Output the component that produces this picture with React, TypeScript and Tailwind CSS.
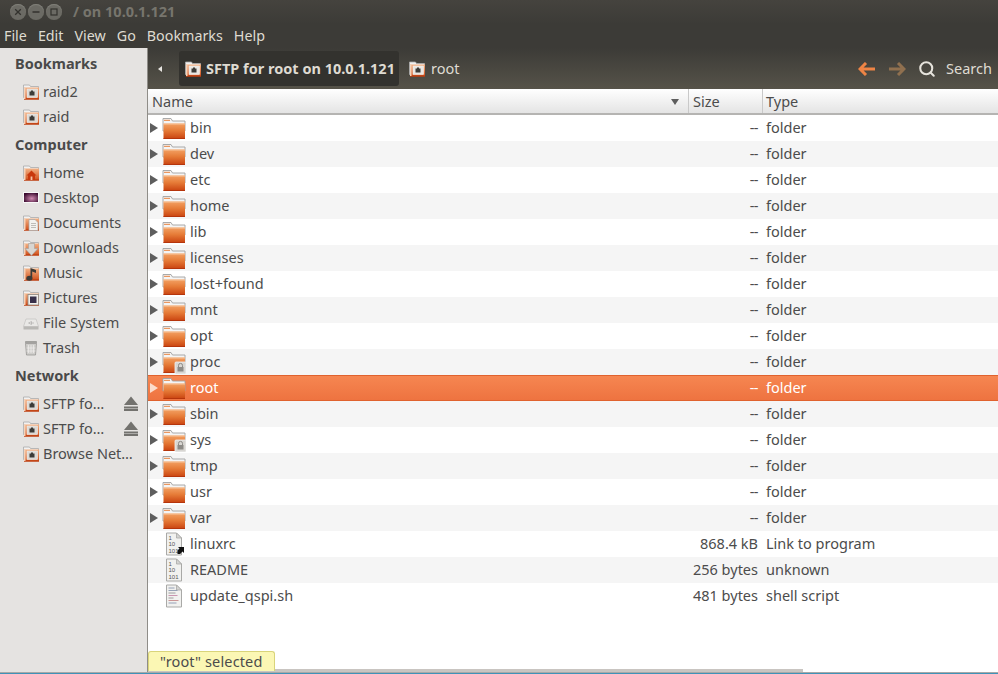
import { Search } from "lucide-react";

const font = "font-['Noto_Sans',sans-serif]";

const bookmarks = ["raid2", "raid"];
const computer = [
  { name: "Home", kind: "home" },
  { name: "Desktop", kind: "desktop" },
  { name: "Documents", kind: "documents" },
  { name: "Downloads", kind: "downloads" },
  { name: "Music", kind: "music" },
  { name: "Pictures", kind: "pictures" },
  { name: "File System", kind: "drive" },
  { name: "Trash", kind: "trash" },
];

const folders = ["bin", "dev", "etc", "home", "lib", "licenses", "lost+found", "mnt", "opt", "proc", "root", "sbin", "sys", "tmp", "usr", "var"];
const locked = ["proc", "sys"];

function FolderIcon({ lock }: { lock?: boolean }) {
  return (
    <svg width="24" height="24" viewBox="0 0 24 24" className="shrink-0">
      <defs>
        <linearGradient id="fold" x1="0" y1="0" x2="0" y2="1">
          <stop offset="0" stopColor="#f3a164" />
          <stop offset="0.45" stopColor="#e67c38" />
          <stop offset="1" stopColor="#c9420f" />
        </linearGradient>
      </defs>
      <path d="M1 2.500h8l1.500 2.500H23v10H1z" fill="#f4f4f4" stroke="#a0a0a0" strokeWidth="0.9" />
      <rect x="2" y="3.800" width="6" height="1" fill="#e8803c" />
      <path d="M1.500 7.500h21.500v15a.5.5 0 0 1-.5.5H2a.5.5 0 0 1-.5-.5z" fill="url(#fold)" />
      <rect x="1.500" y="7.500" width="21.500" height="1" fill="#f8c39a" />
      <rect x="1.500" y="22" width="21.500" height="1" fill="#b5350c" />
      {lock && (
        <g>
          <rect x="13" y="12" width="11" height="12" rx="1" fill="#d8d6d2" stroke="#f2f2f2" strokeWidth="0.8" />
          <path d="M16.500 17v-1.600a2 2 0 0 1 4 0V17" fill="none" stroke="#8c8a86" strokeWidth="1" />
          <rect x="15.500" y="17" width="6" height="4.500" fill="#8c8a86" />
        </g>
      )}
    </svg>
  );
}

function SmallBase({ children }: { children?: React.ReactNode }) {
  return (
    <svg width="16" height="16" viewBox="0 0 16 16" className="shrink-0">
      <defs>
        <linearGradient id="smallfold" x1="0" y1="0" x2="0" y2="1">
          <stop offset="0" stopColor="#f2b184" />
          <stop offset="1" stopColor="#cf4d18" />
        </linearGradient>
      </defs>
      <path d="M.5 1h6l1 1.500h8v11H.5z" fill="#f1f1f1" stroke="#a9a9a9" strokeWidth="0.8" />
      <rect x="1" y="3.500" width="15" height="12" fill="url(#smallfold)" />
      <rect x="1" y="14.500" width="15" height="1" fill="#b5380f" />
      <rect x="1" y="4" width="1.500" height="11" fill="#f6d2b8" />
      {children}
    </svg>
  );
}

function RemoteIcon({ light }: { light?: boolean }) {
  return (
    <SmallBase>
      <rect x="4" y="5" width="10.500" height="8.500" fill={light ? "#e9e7e3" : "#dcdad6"} stroke="#f4f2ee" strokeWidth="0.6" />
      <rect x="6.500" y="7.500" width="5" height="4" fill="#3c3b37" />
      <rect x="8" y="6.500" width="2" height="1.500" fill="#3c3b37" />
    </SmallBase>
  );
}

function PlaceIcon({ kind }: { kind: string }) {
  if (kind === "home")
    return (
      <SmallBase>
        <path d="M3.500 10.500l5-5 5 5h-1.500v4.500H5v-4.500z" fill="#c9380c" />
        <rect x="7.600" y="11.500" width="1.800" height="3.500" fill="#f3c1a3" />
      </SmallBase>
    );
  if (kind === "desktop")
    return (
      <svg width="16" height="16" viewBox="0 0 16 16" className="shrink-0">
        <defs>
          <radialGradient id="desk" cx="0.55" cy="0.6" r="0.6">
            <stop offset="0" stopColor="#d28bb2" />
            <stop offset="1" stopColor="#3a0a2e" />
          </radialGradient>
        </defs>
        <rect x="0.500" y="2.500" width="15" height="10" fill="url(#desk)" stroke="#f7f7f7" strokeWidth="1" />
      </svg>
    );
  if (kind === "documents")
    return (
      <SmallBase>
        <path d="M6 4.500h6l3 3v8H6z" fill="#f3f2ef" stroke="#a7a5a2" strokeWidth="0.7" />
        <path d="M8 8.500h5M8 10.500h5M8 12.500h5" stroke="#b0aeaa" strokeWidth="0.8" />
      </SmallBase>
    );
  if (kind === "downloads")
    return (
      <SmallBase>
        <path d="M5.500 3.500h6v5h3.500l-6.500 7L2 8.500h3.500z" fill="#d8d6d2" stroke="#a2a09c" strokeWidth="0.6" />
      </SmallBase>
    );
  if (kind === "music")
    return (
      <SmallBase>
        <path d="M7.500 13V3l5.500 2v3L9.200 6.600V13z" fill="#3c3b37" />
        <ellipse cx="6.400" cy="13.200" rx="3" ry="2.500" fill="#3c3b37" />
      </SmallBase>
    );
  if (kind === "pictures")
    return (
      <SmallBase>
        <rect x="5" y="4.500" width="10.500" height="10.500" fill="#f2f0ec" stroke="#8b8985" strokeWidth="0.8" />
        <rect x="7" y="6.500" width="6.500" height="6.500" fill="#37304a" />
      </SmallBase>
    );
  if (kind === "drive")
    return (
      <svg width="16" height="16" viewBox="0 0 16 16" className="shrink-0">
        <path d="M3 4h10l2.500 7.500h-15z" fill="#e9e8e6" stroke="#c3c2c0" strokeWidth="0.7" />
        <rect x="0.500" y="11.500" width="15" height="3" rx="0.600" fill="#b9b8b5" />
        <path d="M5.500 8l3-1.500v3zM8 8h3" stroke="#b5b4b2" strokeWidth="0.8" fill="none" />
      </svg>
    );
  return (
    <svg width="16" height="16" viewBox="0 0 16 16" className="shrink-0">
      <path d="M2.500 3.500h11l-1 11.500h-9z" fill="#cfcecb" stroke="#8e8d8a" strokeWidth="0.7" />
      <rect x="2" y="1" width="12" height="2.500" rx="0.800" fill="#a3a29f" />
      <path d="M5.500 5v8M8 5v8M10.500 5v8M3.500 8h9M3.500 11h9" stroke="#efeeec" strokeWidth="0.7" />
    </svg>
  );
}

function EjectIcon() {
  return (
    <svg width="16" height="16" viewBox="0 0 16 16" className="shrink-0">
      <path d="M8 0.500l7 8.500H1z" fill="#73726e" />
      <rect x="1" y="10.500" width="14" height="2" fill="#73726e" />
      <rect x="1" y="13" width="14" height="2" fill="#73726e" />
    </svg>
  );
}

function FileIcon({ kind }: { kind: "binary" | "link" | "script" }) {
  return (
    <svg width="24" height="24" viewBox="0 0 24 24" className="shrink-0">
      <path d="M4.500 1h10l5 5v17h-15z" fill="#f1f1ef" stroke="#a9a9a7" strokeWidth="1" />
      <path d="M14.500 1v5h5z" fill="#d4d4d2" stroke="#a9a9a7" strokeWidth="0.8" />
      {kind !== "script" ? (
        <g fill="#555" fontFamily="Liberation Sans, sans-serif" fontSize="6">
          <text x="6.500" y="7.500">1</text>
          <text x="6.500" y="14">10</text>
          <text x="6.500" y="20.500">101</text>
        </g>
      ) : (
        <g strokeWidth="0.8">
          <path d="M6.500 4h6" stroke="#7f8ea8" />
          <path d="M6.500 6.500h9" stroke="#7f8ea8" />
          <path d="M6.500 9h7" stroke="#8a8a8a" />
          <path d="M6.500 11.500h9" stroke="#c07f9f" />
          <path d="M6.500 14h5" stroke="#8a8a8a" />
          <path d="M6.500 16.500h10" stroke="#c07f7f" />
          <path d="M6.500 19h8" stroke="#7f8ea8" />
        </g>
      )}
      {kind === "link" && <path d="M15.500 23v-3.500l2-2-1.500-1.500h6v6l-1.500-1.500-2 2v.5z" fill="#111" transform="translate(0 -1)" />}
    </svg>
  );
}

function Row({ name, size, type, icon, index, selected, arrow = true }: { name: string; size: string; type: string; icon: React.ReactNode; index: number; selected?: boolean; arrow?: boolean }) {
  const zebra = index % 2 === 1 ? "bg-[#f5f5f5]" : "bg-white";
  return (
    <div className={`flex h-[26px] items-center text-[14.5px] ${selected ? "border-y border-[#e0622e] bg-gradient-to-b from-[#f68651] to-[#ee7340] text-white" : `${zebra} text-[#4c4c4c]`}`}>
      <div className="flex w-[14px] items-center pl-px">
        {arrow && (
          <svg width="10" height="12" viewBox="0 0 10 12">
            <path d="M1 1l8 5-8 5z" fill={selected ? "#fbdccc" : "#5e5e5e"} />
          </svg>
        )}
      </div>
      <div className="flex w-[526px] items-center">
        {icon}
        <span className="ml-1">{name}</span>
      </div>
      <div className={`w-[72px] pr-[2px] text-right ${size === "--" ? "tracking-[-0.5px]" : ""}`}>{size}</div>
      <div className="ml-[6px]">{type}</div>
    </div>
  );
}

function SideItem({ label, icon, eject }: { label: string; icon: React.ReactNode; eject?: boolean }) {
  return (
    <div className="flex h-[25px] items-center pl-[23px] text-[14.5px] text-[#4c4c4c]">
      {icon}
      <span className="ml-1 whitespace-nowrap">{label}</span>
      {eject && (
        <span className="ml-auto mr-[8px]">
          <EjectIcon />
        </span>
      )}
    </div>
  );
}

function SideHeading({ children, nudge }: { children: string; nudge?: boolean }) {
  return <div className={`flex h-[30px] items-center pl-[15px] text-[14.5px] font-bold text-[#4a4a4a] ${nudge ? "pt-[2px]" : ""}`}>{children}</div>;
}

export default function App() {
  return (
    <div className={`flex h-[674px] w-[998px] flex-col overflow-hidden bg-[#3c3b37] ${font}`}>
      {/* title bar */}
      <div className="flex h-[24px] shrink-0 items-center bg-gradient-to-b from-[#45433e] to-[#3c3b37] pl-[10px]">
        <div className="flex gap-[2px]">
          {[0, 1, 2].map((i) => (
            <div key={i} className="flex h-4 w-4 items-center justify-center rounded-full bg-[#6b6a64] shadow-[inset_0_1px_1px_#82817a]">
              <svg width="8" height="8" viewBox="0 0 8 8">
                {i === 0 && <path d="M1.200 1.200l5.600 5.600M6.800 1.200l-5.600 5.600" stroke="#33322e" strokeWidth="1.300" />}
                {i === 1 && <path d="M0.500 4h7" stroke="#33322e" strokeWidth="1.500" />}
                {i === 2 && <rect x="1" y="1" width="6" height="6" fill="none" stroke="#33322e" strokeWidth="1.200" />}
              </svg>
            </div>
          ))}
        </div>
        <span className="ml-[11px] text-[14.5px] font-bold text-[#77756d]">/ on 10.0.1.121</span>
      </div>

      {/* menu bar */}
      <div className="flex h-[24px] shrink-0 items-center gap-[11px] pl-[4px] text-[14.3px] text-[#dfdbd2]">
        {["File", "Edit", "View", "Go", "Bookmarks", "Help"].map((m) => (
          <span key={m}>{m}</span>
        ))}
      </div>

      <div className="flex min-h-0 flex-1">
        {/* sidebar */}
        <div className="w-[147px] shrink-0 bg-[#e5e3e1]">
          <SideHeading nudge>Bookmarks</SideHeading>
          <div className="my-px">
            {bookmarks.map((b) => (
              <SideItem key={b} label={b} icon={<RemoteIcon />} />
            ))}
          </div>
          <SideHeading>Computer</SideHeading>
          {computer.map((c) => (
            <SideItem key={c.name} label={c.name} icon={<PlaceIcon kind={c.kind} />} />
          ))}
          <SideHeading nudge>Network</SideHeading>
          <div className="mt-px">
            <SideItem label="SFTP fo…" icon={<RemoteIcon />} eject />
            <SideItem label="SFTP fo…" icon={<RemoteIcon />} eject />
            <SideItem label="Browse Net…" icon={<RemoteIcon />} />
          </div>
        </div>

        <div className="flex min-w-0 flex-1 flex-col border-l border-[#8f8d88]">
          {/* toolbar */}
          <div className="flex h-[41px] shrink-0 items-center bg-gradient-to-b from-[#3c3b37] to-[#565349] pl-[10px] pr-[6px]">
            <svg width="4" height="6" viewBox="0 0 4 6">
              <path d="M4 0v6L0 3z" fill="#e8e6e2" />
            </svg>
            <div className="ml-[17px] flex h-[35px] items-center rounded-[3px] bg-[#33322e] pl-[6px] pr-[4px] text-[14.5px] font-bold text-[#dfdbd2]">
              <RemoteIcon light />
              <span className="ml-[5px] whitespace-nowrap">SFTP for root on 10.0.1.121</span>
            </div>
            <div className="ml-[10px] flex items-center text-[14.5px] text-[#dfdbd2]">
              <RemoteIcon light />
              <span className="ml-[6px]">root</span>
            </div>
            <div className="ml-auto flex items-center">
              <svg width="18" height="14" viewBox="0 0 18 14">
                <path d="M8 1L2 7l6 6M2 7h15" fill="none" stroke="#ee8445" strokeWidth="3" />
              </svg>
              <svg width="18" height="14" viewBox="0 0 18 14" className="ml-[12px]">
                <path d="M10 1l6 6-6 6M16 7H1" fill="none" stroke="#90704f" strokeWidth="3" />
              </svg>
              <Search size={18} strokeWidth={2.75} className="ml-[12px] text-[#e6e3dc]" />
              <span className="ml-[10px] text-[14.5px] text-[#dfdbd2]">Search</span>
            </div>
          </div>

          {/* column headers */}
          <div className="flex h-[26px] shrink-0 border-b-2 border-[#b5b4b2] bg-gradient-to-b from-white to-[#e4e4e4] text-[14.5px] text-[#4c4c4c]">
            <div className="flex w-[541px] items-center justify-between border-r border-[#c9c9c9] pl-[4px] pr-[9px] pt-[2px]">
              <span>Name</span>
              <svg width="8" height="6" viewBox="0 0 8 6">
                <path d="M0 0h8L4 6z" fill="#5e5e5e" />
              </svg>
            </div>
            <div className="flex w-[74px] items-center border-r border-[#c9c9c9] pl-[4px] pt-[2px]">Size</div>
            <div className="flex items-center pl-[3px] pt-[2px]">Type</div>
          </div>

          {/* file list */}
          <div className="relative min-h-0 flex-1 bg-white">
            {folders.map((f, i) => (
              <Row key={f} index={i} name={f} size="--" type="folder" selected={f === "root"} icon={<FolderIcon lock={locked.includes(f)} />} />
            ))}
            <Row index={16} name="linuxrc" size="868.4 kB" type="Link to program" arrow={false} icon={<FileIcon kind="link" />} />
            <Row index={17} name="README" size="256 bytes" type="unknown" arrow={false} icon={<FileIcon kind="binary" />} />
            <Row index={18} name="update_qspi.sh" size="481 bytes" type="shell script" arrow={false} icon={<FileIcon kind="script" />} />

            <div className="absolute bottom-0 left-0 h-[3px] w-[655px] bg-[#c9c5c1]" />
            {/* floating status label */}
            <div className="absolute bottom-px left-0 flex h-[20px] items-center rounded-t-[3px] border-x border-t border-[#d9d47a] bg-[#fbf7b4] px-[11px] text-[14.5px] tracking-[0.15px] text-[#4c4c4c]">
              "root" selected
            </div>
          </div>
        </div>
      </div>

      {/* desktop peeking out below the window */}
      <div className="h-px shrink-0 bg-[#a8a8a8]" />
      <div className="h-px shrink-0 bg-[#3f93b8]" />
    </div>
  );
}
